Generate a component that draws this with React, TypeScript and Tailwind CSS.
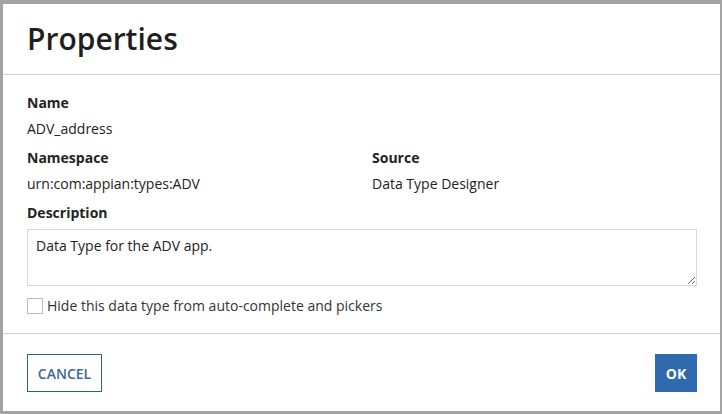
import { useState } from "react"

const font = { fontFamily: '"Open Sans", "Liberation Sans", sans-serif' }

function Field({ label, value }: { label: string; value: string }) {
  return (
    <div className="flex flex-col">
      <div className="text-[14px] font-bold leading-[20px] text-[#222]">{label}</div>
      <div className="mt-[6px] text-[14px] leading-[20px] text-[#222]">{value}</div>
    </div>
  )
}

export default function App() {
  const [hidden, setHidden] = useState(false)
  const [desc, setDesc] = useState("Data Type for the ADV app.")

  return (
    <div className="h-[414px] w-[722px] bg-[#a3a3a3] pt-[4px] pl-[3px] pr-[2px] pb-[3px]" style={font}>
      <div className="flex h-full w-full flex-col bg-white">
        <div className="flex h-[71px] items-center border-b border-[#d0d0d0] px-[24px]">
          <h1 className="text-[30px] font-semibold leading-none text-[#1f1f1f]">Properties</h1>
        </div>

        <div className="flex flex-col pl-[24px] pr-[23px] pt-[18px]">
          <Field label="Name" value="ADV_address" />
          <div className="mt-[9px] grid grid-cols-2 gap-x-[20px]">
            <Field label="Namespace" value="urn:com:appian:types:ADV" />
            <Field label="Source" value="Data Type Designer" />
          </div>
          <div className="mt-[9px] text-[14px] font-bold leading-[20px] text-[#222]">Description</div>
          <textarea
            value={desc}
            onChange={(e) => setDesc(e.target.value)}
            className="mt-[6px] h-[57px] w-full resize-y border border-[#d6d6d6] px-[8px] py-[6px] text-[14px] leading-[20px] text-[#222] outline-none"
          />
          <label className="mt-[10px] flex items-center gap-[4px] text-[14px] leading-[20px] text-[#333]">
            <input
              type="checkbox"
              checked={hidden}
              onChange={(e) => setHidden(e.target.checked)}
              className="h-[16px] w-[16px] appearance-none border border-[#bdbdbd] bg-white"
            />
            Hide this data type from auto-complete and pickers
          </label>
        </div>

        <div className="mt-[17px] flex flex-1 items-start justify-between border-t border-[#d0d0d0] pl-[24px] pr-[23px] pt-[20px]">
          <button className="h-[38px] w-[75px] border border-[#2f5f8c] bg-white text-[14px] font-semibold text-[#3c6a98]">
            CANCEL
          </button>
          <button className="h-[38px] w-[42px] bg-[#2e6aad] text-[14px] font-bold text-white">OK</button>
        </div>
      </div>
    </div>
  )
}
